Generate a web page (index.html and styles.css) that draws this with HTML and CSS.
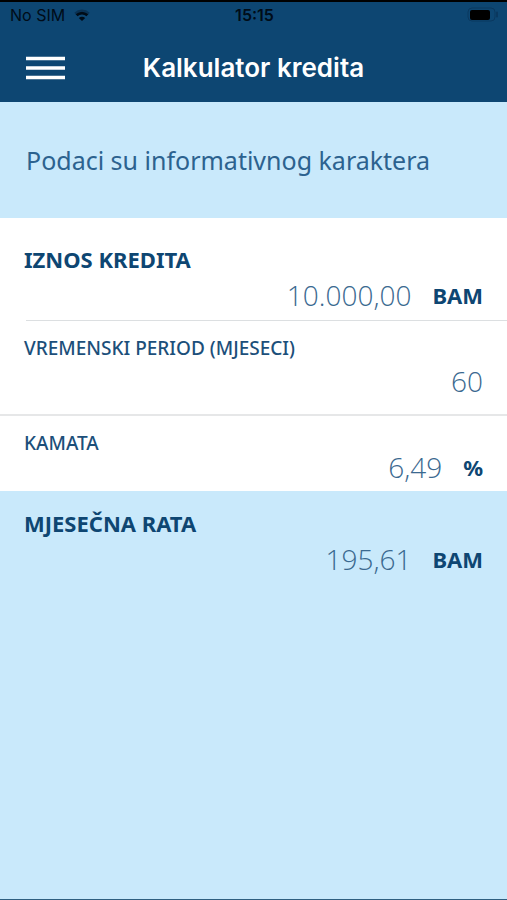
FILE: index.html
```html
<!DOCTYPE html>
<html lang="bs">
<head>
<meta charset="utf-8">
<meta name="viewport" content="width=device-width, initial-scale=1">
<title>Kalkulator kredita</title>
<link rel="stylesheet" href="styles.css">
</head>
<body>
<header class="header">
  <div class="status">
    <div class="carrier">
      <span>No SIM</span>
      <svg class="wifi" viewBox="0 0 16 12" aria-hidden="true">
        <path d="M1 4.4C5 .6 11 .6 15 4.4" fill="none" stroke="#0a3254" stroke-width="2"/>
        <path d="M2.600 6.300C5.600 3.400 10.400 3.400 13.400 6.300" fill="none" stroke="#000c18" stroke-width="2.800"/>
        <path d="M4.800 9C6.800 7.200 9.200 7.200 11.200 9L8 12Z" fill="#000c18"/>
      </svg>
    </div>
    <time class="clock">15:15</time>
    <svg class="battery" viewBox="0 0 32 16" aria-hidden="true">
      <rect x="1" y="1" width="27" height="13" rx="4" fill="none" stroke="#0a385f" stroke-width="1"/>
      <rect x="3" y="3" width="20" height="10" rx="2" fill="#000"/>
      <path d="M30 5.500v4" stroke="#0a385f" stroke-width="2" stroke-linecap="round"/>
    </svg>
  </div>
  <div class="titlebar">
    <button class="menu" type="button" aria-label="Meni">
      <svg viewBox="0 0 39 24" aria-hidden="true"><path d="M0 2.500h39M0 12h39M0 21.500h39" stroke="#fff" stroke-width="3.400"/></svg>
    </button>
    <h1 class="title">Kalkulator kredita</h1>
  </div>
</header>
<main class="main">
  <p class="notice">Podaci su informativnog karaktera</p>
  <form class="form">
    <div class="field amount">
      <label class="label strong" for="amount">IZNOS KREDITA</label>
      <div class="entry">
        <input class="value" id="amount" type="text" inputmode="decimal" value="10.000,00">
        <span class="unit">BAM</span>
      </div>
    </div>
    <div class="field period">
      <label class="label" for="period">VREMENSKI PERIOD (MJESECI)</label>
      <div class="entry">
        <input class="value" id="period" type="text" inputmode="numeric" value="60">
      </div>
    </div>
    <div class="field rate">
      <label class="label" for="rate">KAMATA</label>
      <div class="entry">
        <input class="value" id="rate" type="text" inputmode="decimal" value="6,49">
        <span class="unit">%</span>
      </div>
    </div>
    <div class="field result">
      <label class="label strong" for="payment">MJESEČNA RATA</label>
      <div class="entry">
        <output class="value" id="payment" for="amount period rate">195,61</output>
        <span class="unit">BAM</span>
      </div>
    </div>
  </form>
</main>
</body>
</html>
```

FILE: styles.css
```css
* {
  box-sizing: border-box;
}

body {
  margin: 0;
  min-height: 100vh;
  display: flex;
  flex-direction: column;
  border-bottom: 1px solid #2f5f80;
  background: #c9e9fb;
  color: #0e4672;
  font-family: "Noto Sans", "Open Sans", sans-serif;
}

.header {
  border-top: 2px solid #000;
  background: #0d4672;
  font-family: Inter, "Liberation Sans", sans-serif;
}

.status {
  display: grid;
  grid-template-columns: 1fr auto 1fr;
  align-items: center;
  height: 26px;
  padding: 0 8px 0 10px;
  color: #000c18;
  font-size: 16px;
  line-height: 26px;
}

.carrier {
  display: flex;
  align-items: center;
  gap: 9px;
}

.wifi {
  width: 16px;
  height: 12px;
}

.clock {
  font-weight: 600;
}

.battery {
  width: 32px;
  height: 16px;
  justify-self: end;
}

.titlebar {
  display: grid;
  grid-template-columns: 1fr auto 1fr;
  align-items: center;
  height: 74px;
  padding: 6px 26px 0;
}

.menu {
  width: 39px;
  height: 24px;
  padding: 0;
  border: 0;
  background: none;
}

.menu svg {
  display: block;
  width: 100%;
  height: 100%;
}

.title {
  margin: 0;
  color: #fff;
  font-size: 26px;
  font-weight: 600;
  line-height: 32px;
}

.notice {
  margin: 0;
  padding: 42px 26px;
  color: #2c628f;
  font-size: 25px;
  line-height: 32px;
}

.field {
  display: flex;
  flex-direction: column;
  padding: 0 24px;
  background: #fff;
}

.amount {
  padding-top: 27px;
  padding-bottom: 4px;
  background: linear-gradient(#dcdfe1, #dcdfe1) 26px 100% / 100% 1px no-repeat #fff;
}

.period {
  padding-top: 14px;
  padding-bottom: 14px;
  border-bottom: 2px solid #e6e7e8;
}

.rate {
  padding-top: 14px;
  padding-bottom: 13px;
}

.result {
  padding-top: 18px;
  background: none;
}

.label {
  align-self: flex-start;
  color: #1c4f7a;
  font-size: 19px;
  font-weight: 500;
  line-height: 26px;
}

.strong {
  color: #0e4672;
  font-size: 22px;
  font-weight: 700;
  line-height: 28px;
}

.entry {
  display: flex;
  align-items: center;
  gap: 21px;
  height: 44px;
}

.value {
  flex: 1;
  min-width: 0;
  padding: 0;
  border: 0;
  background: none;
  color: #3b6990;
  font-family: "Open Sans", "Noto Sans", sans-serif;
  font-size: 28px;
  font-weight: 300;
  line-height: 40px;
  text-align: right;
}

.unit {
  font-size: 22px;
  font-weight: 700;
  line-height: 40px;
}

.period .entry {
  height: 39px;
}

.rate .entry {
  height: 22px;
}
```
